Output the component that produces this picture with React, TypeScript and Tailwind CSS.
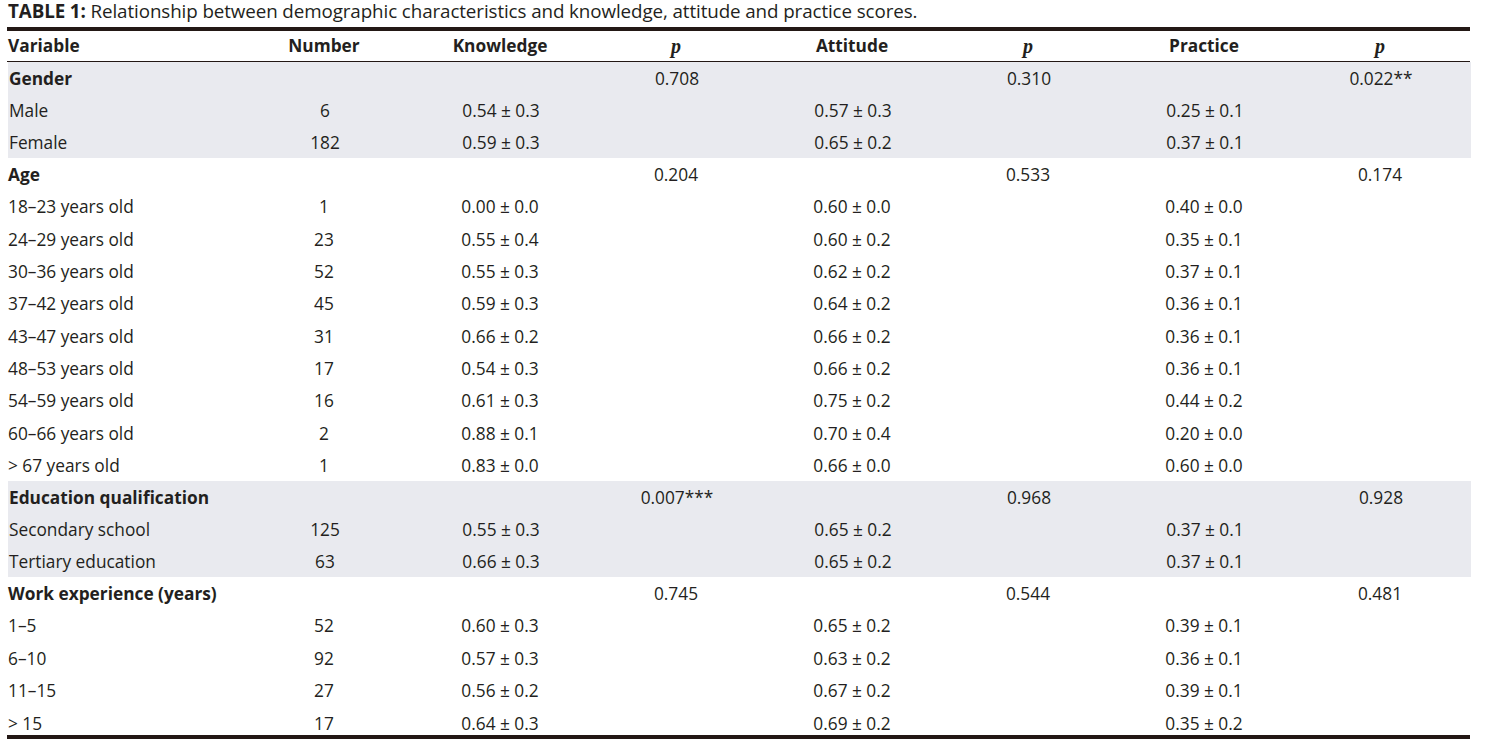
const groups: {
  title: string;
  p: [string, string, string];
  shaded: boolean;
  rowH: string;
  rows: [string, string, string, string, string][];
}[] = [
  {
    title: "Gender",
    p: ["0.708", "0.310", "0.022**"],
    shaded: true,
    rowH: "h-[32px]",
    rows: [
      ["Male", "6", "0.54 ± 0.3", "0.57 ± 0.3", "0.25 ± 0.1"],
      ["Female", "182", "0.59 ± 0.3", "0.65 ± 0.2", "0.37 ± 0.1"],
    ],
  },
  {
    title: "Age",
    p: ["0.204", "0.533", "0.174"],
    shaded: false,
    rowH: "h-[32.3px]",
    rows: [
      ["18–23 years old", "1", "0.00 ± 0.0", "0.60 ± 0.0", "0.40 ± 0.0"],
      ["24–29 years old", "23", "0.55 ± 0.4", "0.60 ± 0.2", "0.35 ± 0.1"],
      ["30–36 years old", "52", "0.55 ± 0.3", "0.62 ± 0.2", "0.37 ± 0.1"],
      ["37–42 years old", "45", "0.59 ± 0.3", "0.64 ± 0.2", "0.36 ± 0.1"],
      ["43–47 years old", "31", "0.66 ± 0.2", "0.66 ± 0.2", "0.36 ± 0.1"],
      ["48–53 years old", "17", "0.54 ± 0.3", "0.66 ± 0.2", "0.36 ± 0.1"],
      ["54–59 years old", "16", "0.61 ± 0.3", "0.75 ± 0.2", "0.44 ± 0.2"],
      ["60–66 years old", "2", "0.88 ± 0.1", "0.70 ± 0.4", "0.20 ± 0.0"],
      ["> 67 years old", "1", "0.83 ± 0.0", "0.66 ± 0.0", "0.60 ± 0.0"],
    ],
  },
  {
    title: "Education qualification",
    p: ["0.007***", "0.968", "0.928"],
    shaded: true,
    rowH: "h-[32px]",
    rows: [
      ["Secondary school", "125", "0.55 ± 0.3", "0.65 ± 0.2", "0.37 ± 0.1"],
      ["Tertiary education", "63", "0.66 ± 0.3", "0.65 ± 0.2", "0.37 ± 0.1"],
    ],
  },
  {
    title: "Work experience (years)",
    p: ["0.745", "0.544", "0.481"],
    shaded: false,
    rowH: "h-[32.25px]",
    rows: [
      ["1–5", "52", "0.60 ± 0.3", "0.65 ± 0.2", "0.39 ± 0.1"],
      ["6–10", "92", "0.57 ± 0.3", "0.63 ± 0.2", "0.36 ± 0.1"],
      ["11–15", "27", "0.56 ± 0.2", "0.67 ± 0.2", "0.39 ± 0.1"],
      ["> 15", "17", "0.64 ± 0.3", "0.69 ± 0.2", "0.35 ± 0.2"],
    ],
  },
];

const cols = "grid grid-cols-[229px_repeat(7,176px)] items-center";

function Row({ cells, bold, h }: { cells: string[]; bold?: boolean; h: string }) {
  return (
    <div className={`${cols} ${h}`}>
      {cells.map((c, i) => (
        <div
          key={i}
          className={i === 0 ? `pl-[1px] ${bold ? "font-bold" : ""}` : "text-center"}
        >
          {c}
        </div>
      ))}
    </div>
  );
}

export default function App() {
  return (
    <div className="bg-white w-[1488px] h-[751px] text-[#231f20] font-['Open_Sans',sans-serif] text-[17.3px]">
      <div className="pl-[8px] h-[27px] leading-[22px] text-[18.8px] tracking-[-0.1px] whitespace-nowrap">
        <span className="font-bold">TABLE 1:</span> Relationship between
        demographic characteristics and knowledge, attitude and practice scores.
      </div>
      <div className="ml-[7px] w-[1463px]">
        <div className="border-t-[4px] border-[#231815]" />
        <div className={`${cols} h-[31px] border-b border-[#231815] font-bold`}>
          <div className="pl-[1px]">Variable</div>
          <div className="text-center">Number</div>
          <div className="text-center">Knowledge</div>
          <div className="text-center font-['Liberation_Serif',serif] italic text-[20px]">p</div>
          <div className="text-center">Attitude</div>
          <div className="text-center font-['Liberation_Serif',serif] italic text-[20px]">p</div>
          <div className="text-center">Practice</div>
          <div className="text-center font-['Liberation_Serif',serif] italic text-[20px]">p</div>
        </div>
        {groups.map((g, gi) => (
          <div key={g.title} className={g.shaded ? "bg-[#e9eaef] ml-[1px] -mr-[1px]" : ""}>
            <Row bold h={`${g.rowH} pt-[2px]`} cells={[g.title, "", "", g.p[0], "", g.p[1], "", g.p[2]]} />
            {g.rows.map((r, ri) => (
              <Row
                key={r[0]}
                h={
                  gi === groups.length - 1 && ri === g.rows.length - 1
                    ? "h-[29px] pt-[5px]"
                    : `${g.rowH} pt-[2px]`
                }
                cells={[r[0], r[1], r[2], "", r[3], "", r[4], ""]}
              />
            ))}
          </div>
        ))}
        <div className="border-t-[4px] border-[#231815]" />
      </div>
    </div>
  );
}
